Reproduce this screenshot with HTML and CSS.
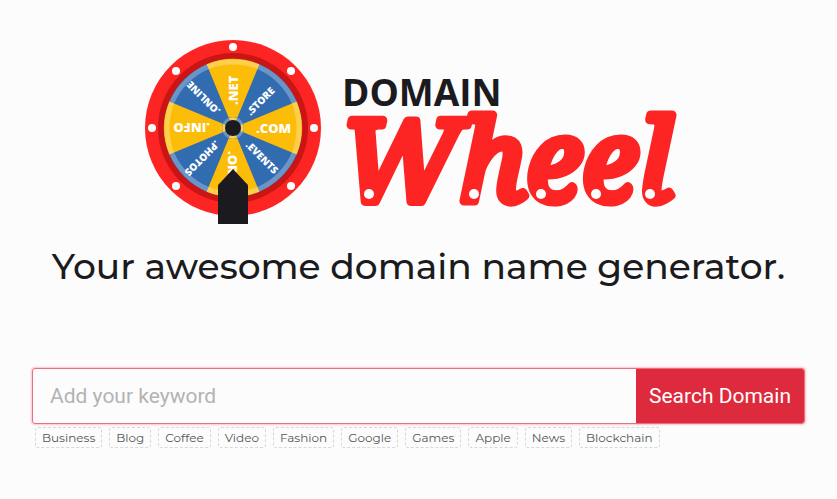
FILE: index.html
```html
<!DOCTYPE html>
<html lang="en">

<head>
    <meta charset="utf-8">
    <title>Domain Wheel</title>
    <link rel="stylesheet" href="styles.css">
</head>

<body>

    <main class="container">

        <svg class="logo" viewBox="144 40 549 184" role="img" aria-label="Domain Wheel">
            <g transform="translate(233 128)">
                <circle r="88" fill="#fd2424" />
                <circle r="75" fill="#cb1515" />
                <circle r="69" fill="#326cb0" />
                <!-- yellow slices -->
                <g fill="#fcbd08">
                    <path id="slice" d="M0 0L63.7 -26.4A69 69 0 0 1 63.7 26.4Z" />
                    <use href="#slice" transform="rotate(90)" />
                    <use href="#slice" transform="rotate(180)" />
                    <use href="#slice" transform="rotate(270)" />
                </g>
                <circle r="66" fill="none" stroke="#fff" stroke-opacity=".28" stroke-width="5" />
                <circle r="11" fill="#326cb0" />
                <g fill="#fcbd08">
                    <path id="hub" d="M0 0L10 -4A11 11 0 0 1 10 4Z" />
                    <use href="#hub" transform="rotate(90)" />
                    <use href="#hub" transform="rotate(180)" />
                    <use href="#hub" transform="rotate(270)" />
                </g>
                <circle r="11" fill="#fff" fill-opacity=".28" />
                <g class="slice-label">
                    <text x="23" y="5">.COM</text>
                    <text x="21" y="4" transform="rotate(45)" class="small">.EVENTS</text>
                    <text x="23" y="5" transform="rotate(90)">.ORG</text>
                    <text x="21" y="4" transform="rotate(135)" class="small">.PHOTOS</text>
                    <text x="23" y="5" transform="rotate(180)">.INFO</text>
                    <text x="21" y="4" transform="rotate(225)" class="small">.ONLINE</text>
                    <text x="23" y="5" transform="rotate(270)">.NET</text>
                    <text x="21" y="4" transform="rotate(315)" class="small">.STORE</text>
                </g>
                <circle r="8" fill="#1b1a1f" />
                <g fill="#fff">
                    <circle cx="0" cy="-81" r="4" />
                    <circle cx="58" cy="-57" r="4" />
                    <circle cx="81" cy="0" r="4" />
                    <circle cx="58" cy="58" r="4" />
                    <circle cx="-57" cy="58" r="4" />
                    <circle cx="-81" cy="0" r="4" />
                    <circle cx="-57" cy="-57" r="4" />
                </g>
                <path d="M-15 96V58Q-15 56 -13 55L0 41L13 55Q15 56 15 58V96Z" fill="#1b1a1f" />
            </g>
            <text x="342" y="106" class="logo-domain">DOMAIN</text>
            <text x="341" y="201" class="logo-wheel">Wheel</text>
            <g fill="#fff">
                <circle cx="369" cy="194" r="5" />
                <circle cx="474" cy="194" r="5" />
                <circle cx="541" cy="194" r="5" />
                <circle cx="596" cy="194" r="5" />
                <circle cx="650" cy="194" r="5" />
            </g>
        </svg>

        <h1 class="tagline">Your awesome domain name generator.</h1>

        <form class="search">
            <input type="text" class="search-input" aria-label="Keyword" placeholder="Add your keyword">
            <button type="submit" class="search-btn">Search Domain</button>
        </form>

        <div class="keywords">
            <button type="button" class="keyword">Business</button>
            <button type="button" class="keyword">Blog</button>
            <button type="button" class="keyword">Coffee</button>
            <button type="button" class="keyword">Video</button>
            <button type="button" class="keyword">Fashion</button>
            <button type="button" class="keyword">Google</button>
            <button type="button" class="keyword">Games</button>
            <button type="button" class="keyword">Apple</button>
            <button type="button" class="keyword">News</button>
            <button type="button" class="keyword">Blockchain</button>
        </div>

    </main>

</body>

</html>
```
FILE: styles.css
```css
* {
    margin: 0;
    padding: 0;
    box-sizing: border-box;
}

body {
    font-family: Montserrat, Inter, sans-serif;
    background-color: #fcfcfc;
    color: #1b1b1d;
}

.container {
    padding: 40px 32px;
}

.logo {
    display: block;
    width: 100%;
    max-width: 549px;
    margin: 0 auto;
    overflow: visible;
}

.slice-label {
    font-family: "Open Sans", sans-serif;
    font-size: 13px;
    font-weight: 800;
    fill: #fff;
}

.slice-label .small {
    font-size: 10px;
}

.logo-domain {
    font-family: "Open Sans", sans-serif;
    font-size: 37px;
    font-weight: 700;
    fill: #1b1a1f;
}

.logo-wheel {
    font-family: "Noto Serif", "Liberation Serif", serif;
    font-size: 113px;
    font-style: italic;
    fill: #fd2424;
    stroke: #fd2424;
    stroke-width: 9px;
    stroke-linejoin: round;
}

.tagline {
    margin-top: 20px;
    font-size: 36px;
    font-weight: 500;
    line-height: 44px;
    text-align: center;
}

.search {
    display: flex;
    margin-top: 80px;
    border: 1px solid #e8707c;
    border-radius: 3px;
    box-shadow: 0 0 2px 1px #fbc4ca;
}

.search-input {
    flex: 1;
    min-width: 0;
    height: 54px;
    padding: 0 17px;
    border: none;
    outline: 0;
    background-color: transparent;
    font-family: Roboto, sans-serif;
    font-size: 21px;
    color: #1b1b1d;
}

.search-input::placeholder {
    color: #b3b3b3;
}

.search-btn {
    padding: 0 13px;
    border: none;
    border-radius: 0 2px 2px 0;
    background-color: #dd2a3d;
    font-family: Roboto, sans-serif;
    font-size: 21px;
    color: #fff;
    cursor: pointer;
}

.keywords {
    display: flex;
    flex-wrap: wrap;
    gap: 7px;
    padding: 3px;
}

.keyword {
    height: 21px;
    padding: 0 6px;
    border: 1px dashed #d8d8d8;
    border-radius: 3px;
    background-color: transparent;
    font-family: Montserrat, Inter, sans-serif;
    font-size: 12px;
    line-height: 19px;
    color: #555;
    cursor: pointer;
}
```
